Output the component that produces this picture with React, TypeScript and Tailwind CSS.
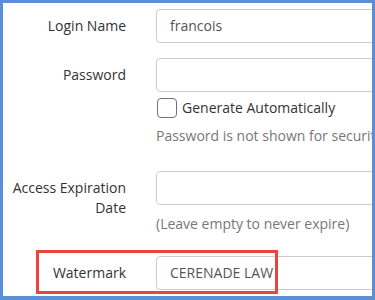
export default function App() {
  return (
    <div
      className="relative h-[300px] w-[375px] overflow-hidden border-[3px] border-r-[3px] border-b-[4px] border-[#5a8fd6] bg-white text-[14px] leading-5 text-[#333]"
      style={{ fontFamily: '"Open Sans", sans-serif' }}
    >
      <div className="mr-[-40px] pt-[6px]">
        <div className="grid grid-cols-[123px_1fr] gap-x-[30px]">
          <label className="pt-[7px] text-right">Login Name</label>
          <div className="flex h-[34px] items-center rounded-[4px] border border-[#ccc] px-[13px] text-[#555]">
            francois
          </div>
        </div>

        <div className="mt-[15px] grid grid-cols-[123px_1fr] gap-x-[30px]">
          <label className="pt-[7px] text-right">Password</label>
          <div>
            <div className="h-[34px] rounded-[4px] border border-[#ccc]" />
            <div className="mt-[6px] flex items-center gap-[5px]">
              <span className="ml-[1px] h-[20px] w-[20px] rounded-[4px] border border-[#6b7384]" />
              <span className="whitespace-nowrap">Generate Automatically</span>
            </div>
            <p className="mt-[8px] whitespace-nowrap text-[#777]">
              Password is not shown for security reasons
            </p>
          </div>
        </div>

        <div className="mt-[25px] grid grid-cols-[123px_1fr] gap-x-[30px]">
          <label className="pt-[7px] text-right">
            Access Expiration
            <br />
            Date
          </label>
          <div>
            <div className="h-[34px] rounded-[4px] border border-[#ccc]" />
            <p className="mt-[9px] whitespace-nowrap text-[#777]">(Leave empty to never expire)</p>
          </div>
        </div>

        <div className="mt-[22px] grid grid-cols-[123px_1fr] gap-x-[30px]">
          <label className="pt-[7px] text-right">Watermark</label>
          <div className="flex h-[34px] items-center rounded-[4px] border border-[#ccc] px-[13px] text-[#555]">
            CERENADE LAW
          </div>
        </div>
      </div>

      <div className="absolute left-[33px] top-[247px] h-[44px] w-[242px] border-[3px] border-[#e8453c]" />
    </div>
  );
}
